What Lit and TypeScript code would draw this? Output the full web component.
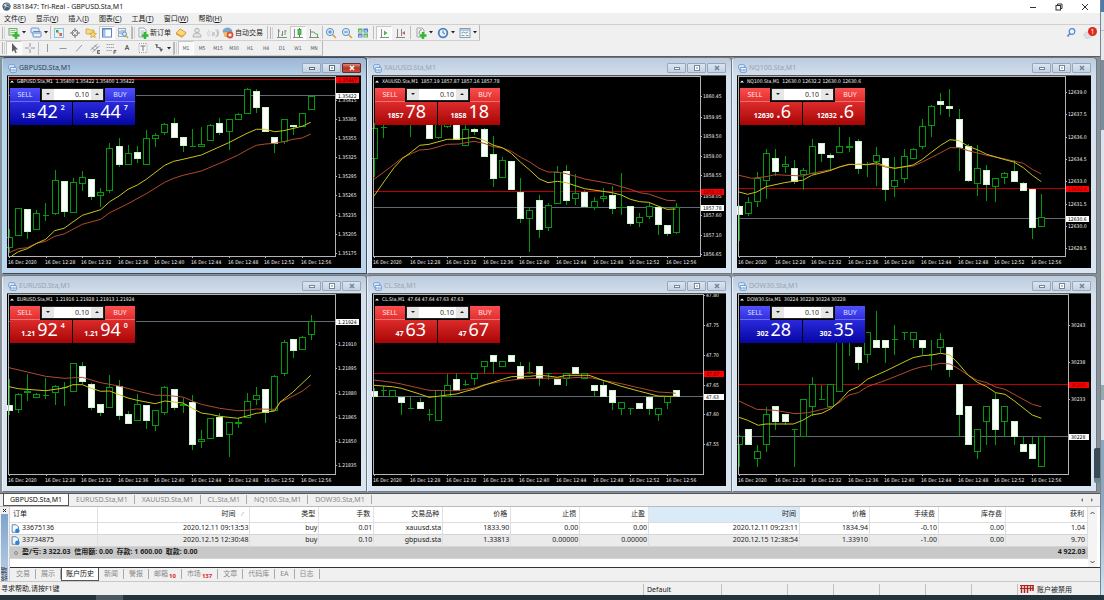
import { LitElement, html, svg, css, nothing } from "lit";
import { customElement, property } from "lit/decorators.js";
import { classMap } from "lit/directives/class-map.js";
import { styleMap } from "lit/directives/style-map.js";

/* ---------- data ---------- */

interface Chart {
  symbol: string;
  ohlc: string;
  active?: boolean;
  up?: boolean;
  sell: [string, string, string];
  buy: [string, string, string];
  axis: number;
  bid: [string, number];
  ask?: [string, number];
  labels: string;
  origin: number;
  candles: string;
  fast: string;
  slow: string;
}

// Series values are in thirds of a pixel: "kind high top bottom low".
// u = hollow body, w = filled body, d = dash, - = no bar.
const STEP = 3;
const toY = (v: number) => v / STEP - 19;
const snap = (v: number) => Math.floor(toY(v));

const CHARTS: Chart[] = [
  {
    symbol: "GBPUSD.Sta,M1", ohlc: "1.35400 1.35422 1.35400 1.35422", active: true, up: true,
    sell: ["1.35", "42", "2"], buy: ["1.35", "44", "7"], axis: 26, origin: 21,
    bid: ["1.35422", 119], ask: ["1.35447", 71],
    labels: "1.35415@132 1.35385@190 1.35355@247 1.35325@304 1.35295@362 1.35265@419 1.35235@477 1.35205@534 1.35175@592",
    candles: "u 517 545 573 585;u 457 457 538 538;w 460 460 525 548;u 460 472 520 520;d 440 478 478 494;u 340 373 472 475;w 377 377 465 480;u 365 379 470 470;u 343 364 382 402;w 369 369 422 430;u 393 409 418 450;u 259 277 404 410;w 243 270 326 332;u 265 292 325 325;w 268 288 306 320;u 220 247 325 325;u 228 237 247 272;u 200 206 230 235;w 185 202 244 244;w 244 244 268 287;d 218 271 271 271;u 210 265 271 271;u 203 208 253 253;w 184 202 230 235;u 190 190 226 280;u 168 175 190 190;u 95 100 172 172;w 97 105 155 170;w 153 153 227 227;w 245 245 263 288;u 190 190 255 262;w 207 208 212 235;u 172 172 211 211;u 120 120 160 160",
    fast: "35,600 55,587 82,578 110,562 137,550 164,524 192,517 247,478 302,461 329,437 357,420 384,400 412,387 439,370 494,328 521,316 549,310 604,297 686,260 741,232 769,220 796,220 824,227 851,224 906,211 932,199",
    slow: "27,590 55,578 82,575 110,562 137,556 164,541 192,534 247,505 302,490 329,470 384,443 439,413 494,379 521,367 549,358 604,345 659,322 713,298 741,282 769,268 796,264 824,262 851,257 879,250 906,246 932,234",
  },
  {
    symbol: "XAUUSD.Sta,M1", ohlc: "1857.19 1857.87 1857.16 1857.78",
    sell: ["1857", "78", ""], buy: ["1858", "18", ""], axis: 26, origin: 19,
    bid: ["1857.78", 455], ask: ["1858.18", 405],
    labels: "1860.45@122 1859.95@183 1859.50@240 1859.00@301 1858.55@358 1858.05@420 1857.60@477 1857.10@539 1856.65@595",
    candles: "u 200 218 307 360;d 200 214 215 245;-;-;d 200 205 205 242;-;w 200 200 247 247;u 200 200 244 248;u 200 205 211 215;w 200 200 250 250;u 205 220 268 268;w 215 220 227 235;w 215 220 300 300;w 237 296 366 392;u 300 313 364 364;w 315 315 401 401;w 365 409 487 500;u 453 462 487 585;w 415 433 520 543;u 440 447 514 523;u 327 348 442 442;w 324 345 433 445;u 352 411 427 446;w 400 409 451 455;u 420 436 453 460;u 395 420 428 435;w 387 418 456 473;d 350 455 455 476;w 450 450 502 507;u 470 484 499 512;u 440 450 481 488;w 455 455 505 535;w 507 507 533 538;u 440 455 529 532",
    fast: "25,420 60,370 85,335 110,308 137,288 162,268 190,265 245,250 275,250 325,244 355,253 382,267 410,275 437,292 464,318 492,342 520,368 547,380 575,376 602,380 657,398 740,410 767,417 794,430 822,437 849,439 877,450 904,460 930,459",
    slow: "25,370 75,333 110,305 137,293 162,282 190,280 245,265 280,264 325,256 355,262 382,272 410,276 437,286 464,303 492,318 520,337 547,348 575,348 602,353 657,369 740,384 794,400 822,410 849,414 877,424 904,433 930,434",
  },
  {
    symbol: "NQ100.Sta,M1", ohlc: "12630.0 12632.2 12630.0 12630.6",
    sell: ["12630", ".6", ""], buy: ["12632", ".6", ""], axis: 26, origin: 16,
    bid: ["12630.6", 486], ask: ["12632.6", 397],
    labels: "12639.0@110 12637.5@176 12636.0@243 12634.5@310 12633.0@377 12631.5@444 12630.0@511 12628.5@578",
    candles: "w 445 450 475 552;u 420 440 472 478;u 345 368 436 450;u 278 293 373 428;w 278 307 346 358;u 298 325 331 348;w 310 337 376 382;u 335 343 355 400;u 247 271 352 352;w 258 262 292 316;w 290 298 305 342;u 210 272 289 289;u 240 271 274 287;w 248 256 337 353;d 315 326 328 360;u 272 298 316 388;w 303 307 399 432;u 302 374 391 420;u 278 301 367 380;u 275 280 307 307;u 188 211 271 278;u 145 151 208 242;w 108 137 146 174;w 98 150 158 182;w 158 190 275 342;w 262 271 373 376;u 265 337 382 418;w 325 343 386 432;u 367 367 391 435;u 345 352 364 382;w 310 346 376 376;w 376 382 404 404;w 400 400 515 548;u 412 485 512 512",
    fast: "22,408 48,415 75,408 103,392 158,380 185,376 213,373 240,358 298,343 325,332 352,325 407,326 435,320 462,331 489,337 517,332 544,327 572,310 600,288 627,268 655,251 682,254 710,271 737,281 765,295 820,311 847,318 875,335 902,358 929,377",
    slow: "22,358 60,367 103,362 130,356 213,360 240,352 298,341 325,333 352,326 380,325 435,325 462,333 489,337 517,333 544,330 572,318 600,304 627,290 655,275 682,275 710,284 765,298 820,309 875,322 902,340 929,354",
  },
  {
    symbol: "EURUSD.Sta,M1", ohlc: "1.21916 1.21928 1.21913 1.21924",
    sell: ["1.21", "92", "4"], buy: ["1.21", "94", "0"], axis: 26, origin: 21,
    bid: ["1.21924", 142],
    labels: "1.21910@211 1.21895@283 1.21880@357 1.21865@430 1.21850@503 1.21835@575",
    candles: "w 312 393 410 420;u 355 362 405 415;u 298 352 356 378;u 355 361 370 370;d 310 365 366 372;u 330 337 355 390;d 322 341 341 395;u 268 268 352 352;w 263 278 323 330;w 325 331 400 407;w 391 391 416 425;u 300 340 400 400;w 316 337 424 436;w 408 421 448 448;u 357 391 440 440;w 393 393 440 464;u 409 409 455 470;u 335 340 415 420;w 342 346 400 405;u 370 390 394 414;w 360 386 511 527;u 465 496 502 521;u 433 433 493 493;w 415 429 488 488;u 445 445 481 546;u 430 445 449 460;u 356 381 430 430;u 336 364 376 390;w 346 346 416 445;u 300 307 409 409;u 195 205 299 304;w 195 195 229 250;u 184 190 226 226;u 122 142 181 196",
    fast: "27,338 55,344 137,350 192,342 219,332 247,332 274,343 302,352 329,351 357,362 384,372 412,379 466,389 494,381 549,387 577,403 604,417 631,421 659,427 686,430 713,433 741,426 769,418 824,411 840,385 879,354 932,304",
    slow: "27,281 82,294 137,307 192,313 247,310 302,326 357,336 412,351 466,364 494,364 549,369 577,381 604,391 659,403 713,410 741,409 769,405 824,406 840,385 879,366 906,352 932,332",
  },
  {
    symbol: "CL.Sta,M1", ohlc: "47.64 47.64 47.63 47.63",
    sell: ["47", "63", ""], buy: ["47", "67", ""], axis: 23, origin: 19,
    bid: ["47.63", 368], ask: ["47.67", 297],
    labels: "47.80@65 47.75@154 47.70@243 47.65@333 47.60@422 47.55@512",
    candles: "w 340 351 367 367;d 333 348 350 365;u 350 350 368 368;w 365 369 386 420;d 367 403 403 403;w 370 385 403 403;d 403 421 421 440;u 350 350 439 439;u 297 333 367 367;w 295 315 349 349;d 315 330 332 333;u 295 297 314 332;u 259 261 277 297;w 241 243 261 297;u 261 261 278 278;w 241 243 261 261;w 261 278 313 313;d 261 296 297 297;w 278 278 313 333;d 295 297 297 315;w 315 315 332 332;u 297 297 314 333;w 277 279 297 297;u 297 297 313 313;w 333 333 349 367;w 315 333 367 367;w 350 350 385 405;u 385 386 403 422;d 403 403 403 421;w 385 387 403 403;w 367 369 403 421;u 403 403 421 440;u 367 368 385 403;w 350 350 366 366",
    fast: "25,334 80,338 107,343 162,360 190,370 217,367 245,363 272,360 300,352 327,345 355,334 382,325 410,316 437,308 464,307 492,307 520,304 547,306 575,310 602,304 670,304 712,319 767,337 822,352 877,366 904,367 935,367",
    slow: "25,318 80,325 107,330 190,349 272,350 327,342 355,332 410,322 464,315 520,313 602,312 650,310 680,312 712,319 767,329 822,342 877,354 915,356 930,358",
  },
  {
    symbol: "DOW30.Sta,M1", ohlc: "30224 30228 30224 30228", up: true,
    sell: ["302", "28", ""], buy: ["302", "35", ""], axis: 23, origin: 16,
    bid: ["30228", 488], ask: ["30235", 331],
    labels: "30243@153 30238@265 30233@377",
    candles: "u 480 488 510 578;w 465 465 510 510;u 510 532 554 578;u 398 421 510 532;w 398 398 443 465;w 420 420 443 452;d 465 465 467 578;u 376 376 487 487;u 308 331 398 423;d 331 376 376 376;u 331 331 398 398;u 190 190 353 353;d 200 200 200 243;w 215 220 264 287;u 175 175 242 264;w 108 198 220 220;w 195 198 220 264;d 152 197 197 242;d 175 176 176 197;u 175 175 197 220;w 195 198 220 242;d 197 242 244 287;u 175 197 220 235;w 220 220 286 308;w 331 331 420 488;w 395 398 510 510;u 465 465 532 554;u 398 398 443 510;w 355 376 465 510;u 398 398 443 488;w 443 443 486 510;w 488 510 532 532;w 488 510 554 554;u 487 487 578 578",
    fast: "22,430 48,439 80,454 103,450 185,450 213,439 240,423 270,418 298,404 325,380 352,350 380,338 407,316 435,303 462,291 517,264 544,251 572,245 600,243 627,238 655,243 682,271 710,304 737,325 765,338 792,356 820,361 847,380 902,423 929,433",
    slow: "22,381 75,406 130,409 190,419 230,416 298,400 325,384 352,363 380,356 407,338 462,319 517,297 544,286 572,278 600,274 627,268 655,270 682,285 710,304 737,319 765,326 792,339 820,346 847,361 902,391 929,398",
  },
];

const TIMES = ["16 Dec 2020", "16 Dec 12:28", "16 Dec 12:32", "16 Dec 12:36", "16 Dec 12:40", "16 Dec 12:44", "16 Dec 12:48", "16 Dec 12:52", "16 Dec 12:56"];

const COLUMNS: [string, number][] = [
  ["订单", 88], ["时间", 152], ["类型", 69], ["手数", 55], ["交易品种", 69], ["价格", 68], ["止损", 69],
  ["止盈", 69], ["时间", 151], ["价格", 70], ["手续费", 69], ["库存费", 67], ["获利", 82],
];
const TOTAL = COLUMNS.reduce((sum, c) => sum + c[1], 0);

const ORDERS = [
  ["33675136", "2020.12.11 09:13:53", "buy", "0.01", "xauusd.sta", "1833.90", "0.00", "0.00", "2020.12.11 09:23:11", "1834.94", "-0.10", "0.00", "1.04"],
  ["33734875", "2020.12.15 12:30:48", "buy", "0.10", "gbpusd.sta", "1.33813", "0.00000", "0.00000", "2020.12.15 12:38:54", "1.33910", "-1.00", "0.00", "9.70"],
];

const MENUS: [string, string][] = [["文件", "F"], ["显示", "V"], ["插入", "I"], ["图表", "C"], ["工具", "T"], ["窗口", "W"], ["帮助", "H"]];
const PERIODS = ["M1", "M5", "M15", "M30", "H1", "H4", "D1", "W1", "MN"];
const CHART_TABS = ["GBPUSD.Sta,M1", "EURUSD.Sta,M1", "XAUUSD.Sta,M1", "CL.Sta,M1", "NQ100.Sta,M1", "DOW30.Sta,M1"];
const PANEL_TABS: [string, string][] = [["交易", ""], ["展示", ""], ["账户历史", ""], ["新闻", ""], ["警报", ""], ["邮箱", "10"], ["市场", "137"], ["文章", ""], ["代码库", ""], ["EA", ""], ["日志", ""]];

/* ---------- icons, 12 x 12 ---------- */

const ICONS: Record<string, unknown> = {
  newChart: svg`<rect x="1" y="1.5" width="8" height="6.5" fill="#dff0df" stroke="#5aa05a"/><path d="M2.500 3.500h5M2.500 5.500h5" stroke="#7ab87a"/><path d="M8 5v7M4.500 8.500h7" stroke="#12b012" stroke-width="2.500"/>`,
  profiles: svg`<rect x="1" y="1" width="8" height="5" rx="1" fill="#dce9fa" stroke="#5b86c4"/><rect x="3" y="4.500" width="8" height="5.500" rx="1" fill="#eaf2fc" stroke="#4a78ba"/><path d="M4 6h6" stroke="#4a78ba"/>`,
  watch: svg`<rect x="1.500" y="1.500" width="9" height="9" fill="#e4f3fb" stroke="#7fb8da"/><path d="M3 3h2.500v2.500H3z" fill="#12a012"/><path d="M6.500 6H9v3H6.500z" fill="#e0451c"/><path d="M4.500 5l3 2.500" stroke="#d8702c"/>`,
  cross: svg`<circle cx="6" cy="6" r="3" fill="none" stroke="#666"/><path d="M6 1v4M6 7v4M1 6h4M7 6h4" stroke="#666"/>`,
  folderStar: svg`<path d="M1 2h3l1 1h4v4H1z" fill="#f4d774" stroke="#c99a26" stroke-width=".8"/><path d="M8 4l1 2.300 2.500.2-1.900 1.600.6 2.500L8 9.300l-2.200 1.300.6-2.500L4.500 6.500 7 6.300z" fill="#ffd84a" stroke="#c48f13" stroke-width=".7"/>`,
  navigator: svg`<rect x="1.500" y="1.500" width="9" height="8.500" fill="#fff" stroke="#3d74b8"/><path d="M2 2h2.500v8H2z" fill="#8fb7e6"/><path d="M1.500 2h9" stroke="#3d74b8"/>`,
  tester: svg`<rect x="1.500" y="1.500" width="7" height="8" fill="#e6eef7" stroke="#8ba3be"/><path d="M3 7V4M5 8V3M7 6V3" stroke="#6c8bb0"/><circle cx="7.500" cy="7" r="2" fill="#d9ecfb" stroke="#4b86c4"/><path d="M9 8.500l2 2.500" stroke="#caa030" stroke-width="1.500"/>`,
  order: svg`<path d="M2 1h5l2 2v7H2z" fill="#fff" stroke="#8a9bb0"/><path d="M3.500 4h4M3.500 6h4" stroke="#aab"/><path d="M8 5v7M4.500 8.500h7" stroke="#12b012" stroke-width="2.500"/>`,
  gold: svg`<path d="M5 2l6 3.500L7 9.500 1 6z" fill="#ffd75a" stroke="#c07d12" stroke-width=".8"/><path d="M1 6v1.500l6 3.300V9.500zM7 9.500v1.300l4-4V5.500z" fill="#d98f1c"/>`,
  person: svg`<circle cx="6" cy="3.500" r="2.200" fill="#e2e2e2" stroke="#a8a8a8"/><path d="M2 10c0-3 1.500-4 4-4s4 1 4 4z" fill="#e2e2e2" stroke="#a8a8a8"/>`,
  radio: svg`<path d="M5 4.500l3 1v3l-3 1z" fill="#c4c4c4"/><path d="M3.500 4a3 3 0 0 0 0 4.500M1.800 3a5 5 0 0 0 0 6.500" fill="none" stroke="#ccc" stroke-width=".9"/><path d="M8.500 3a4 4 0 0 1 0 7M10 2a6 6 0 0 1 0 8" fill="none" stroke="#aaa" stroke-width=".9"/>`,
  auto: svg`<path d="M1 4.500C1 2.500 3 1 5.500 1S10 2.500 10 4.500z" fill="#5aa3dd" stroke="#3b7cb6" stroke-width=".6"/><path d="M1.500 5h8L8 9.500H3z" fill="#f6c64e" stroke="#b9851b" stroke-width=".6"/><circle cx="8" cy="8" r="3.400" fill="#dd2f1c"/><rect x="6.600" y="6.700" width="2.800" height="2.600" fill="#fff"/>`,
  bars: svg`<path d="M2.500 2v8.500M1 10.500h10M2.500 4H4" stroke="#777" fill="none"/><path d="M6.500 4v5M6.500 8H5M9 3v5M9 4h1.500" stroke="#588a58"/>`,
  candle: svg`<path d="M2.500 2v8.500M1 10.500h10" stroke="#777"/><path d="M7.500 1v9" stroke="#12901c"/><rect x="6" y="2.500" width="3" height="5" fill="#35c03f" stroke="#12901c" stroke-width=".8"/>`,
  line: svg`<path d="M2.500 2v8.500M1 10.500h10" stroke="#777"/><path d="M3 5h3l1.500 2H9.500v3" stroke="#3a9a44" fill="none"/>`,
  zoomIn: svg`<circle cx="5" cy="5" r="3.600" fill="#d6ebfb" stroke="#3f83c8"/><path d="M3.200 5h3.600M5 3.200v3.600" stroke="#2a66b0"/><path d="M7.800 7.800l3 3" stroke="#d0a02c" stroke-width="1.800"/>`,
  zoomOut: svg`<circle cx="5" cy="5" r="3.600" fill="#d6ebfb" stroke="#3f83c8"/><path d="M3.200 5h3.600" stroke="#2a66b0"/><path d="M7.800 7.800l3 3" stroke="#d0a02c" stroke-width="1.800"/>`,
  tile: svg`<rect x="1" y="1.500" width="4.500" height="4" fill="#3fae3f"/><rect x="6.500" y="1.500" width="4.500" height="4" fill="#3c6fd0"/><rect x="1" y="6.500" width="4.500" height="4" fill="#3c6fd0"/><rect x="6.500" y="6.500" width="4.500" height="4" fill="#3fae3f"/><path d="M2 4h2.500M7.500 4H10M2 9h2.500M7.500 9H10" stroke="#fff"/>`,
  scroll: svg`<path d="M3.500 2v8.500M2 10.500h9" stroke="#777"/><path d="M6 3.500l3.500 2.500L6 8.500z" fill="#31a63b"/>`,
  shift: svg`<path d="M3.500 2v8.500M2 10.500h9M7.500 2v7" stroke="#777"/><path d="M11 4v4L8 6z" fill="#b5564a"/>`,
  indicator: svg`<path d="M2 1h5l2 2v7H2z" fill="#f4f4f4" stroke="#999"/><path d="M4 7c1-5 1-4 3-4" stroke="#777" fill="none"/><path d="M8 5v7M4.500 8.500h7" stroke="#12b012" stroke-width="2.500"/>`,
  clock: svg`<circle cx="6" cy="6" r="4.300" fill="#e9f4fe" stroke="#2c6fc0" stroke-width="1.800"/><path d="M6 3.500V6l2 1" stroke="#555" fill="none"/>`,
  template: svg`<rect x="1" y="1.500" width="10" height="9" fill="#eef5fb" stroke="#6f93b5"/><path d="M1 3h10" stroke="#6f93b5"/><path d="M2.500 6l2-1 2 1 2.500-1M2.500 8.500h3M7 8.500h2.500" stroke="#6f9a86" fill="none"/>`,
  arrow: svg`<path d="M4 1v9l2-2 1.500 3.200 1.300-.6L7.300 7.500H10z" fill="#444"/>`,
  plus: svg`<path d="M6 1v4M6 7v4M1 6h4M7 6h4" stroke="#888"/>`,
  vline: svg`<path d="M6.500 2v8" stroke="#888"/>`,
  hline: svg`<path d="M2.500 6.500h7" stroke="#888"/>`,
  trend: svg`<path d="M3 9.500l6-6.500" stroke="#888"/>`,
  channel: svg`<path d="M1.500 8l7-6M3.500 10l7-6M3 5.500l3 3M5.500 3l3 3" stroke="#888" fill="none"/><path d="M11 8.500H8.500v3H11M8.500 10H10.500" stroke="#333" stroke-width=".8" fill="none"/>`,
  fibo: svg`<path d="M1.500 2.500h8M1.500 5.500h8M1.500 8.500h6" stroke="#999" stroke-dasharray="1.500 .5"/><path d="M9 12V8.500h2.500M9 10h2" stroke="#333" stroke-width=".8" fill="none"/>`,
  label: svg`<rect x="2" y="1.500" width="8" height="9" fill="#f8f8f8" stroke="#999" stroke-dasharray="1 1"/><path d="M3.500 4h5M6 4v5" stroke="#666"/>`,
  shapes: svg`<path d="M2 2l3 .5-1 3zM6 6l4 1-2 3z" fill="#444"/><path d="M3 5l5 1" stroke="#444"/>`,
  chartWin: svg`<rect x="1" y="1" width="8" height="6" rx="1" fill="#e7f0fb" stroke="#6d9bd3" stroke-width="1.300"/><rect x="3" y="4.500" width="8" height="6.500" rx="1" fill="#f5f9fe" stroke="#5b90d2" stroke-width="1.300"/><path d="M5 9.500V7M7 9.500V6.500M9 9.500V7" stroke="#4f86cc"/>`,
  find: svg`<circle cx="7" cy="4.500" r="2.800" fill="#eef5ff" stroke="#3a6fd0" stroke-width="1.200"/><path d="M5 6.500L2.500 9.500" stroke="#3a6fd0" stroke-width="1.600"/>`,
  bell: svg`<path d="M1 8c0-2 2-3 4-3s4 1 4 3-2 3-4 3l-2 1 .3-1.300C2 10.200 1 9.300 1 8z" fill="#ddd" stroke="#bbb" stroke-width=".6"/>`,
  doc: svg`<path d="M1.500 1h5.500l3 3v7H1.500z" fill="#f4f9ff" stroke="#5486b8" stroke-width="1.300"/><circle cx="8.500" cy="9" r="3" fill="#2d83d2"/>`,
  logo: svg`<circle cx="6" cy="6" r="5.500" fill="#4a6072"/><path d="M2 5c2-3 6-3 8-1M3 9c1-3 4-4 7-2" stroke="#d9e6ee" fill="none"/><circle cx="4.500" cy="4.500" r="1.500" fill="#e8f0f4"/>`,
};
const icon = (name: string) => html`<svg class="icon" width="12" height="12" viewBox="0 0 12 12" fill="none" aria-hidden="true">${ICONS[name]}</svg>`;

const base = css`
  * { box-sizing: border-box; }
  button, input { font: inherit; color: inherit; margin: 0; padding: 0; border: 0; background: none; }
  button { display: inline-flex; align-items: center; justify-content: center; }
  svg { display: block; flex: none; }
`;

/* ---------- one chart window ---------- */

@customElement("chart-window")
class ChartWindow extends LitElement {
  @property({ attribute: false }) chart!: Chart;

  static styles = [base, css`
    :host { display: block; min-width: 0; }
    .window { height: 100%; padding: 0 5px 5px 4px; border: 1px solid #6f7780; border-left-color: #e9f2fa; border-radius: 4px 4px 0 0; background: linear-gradient(#bccbdd, #d5e1ee 20px, #d9e5f1); }
    .window.active { background: linear-gradient(#9cb6d4, #b9d1ea 20px, #bcd4ec); border-color: #3c4d60; border-left-color: #a8e4f4; }
    .bar { display: flex; align-items: center; height: 17px; padding-top: 3px; gap: 1px; color: #97a4b3; }
    .active .bar { color: #2f3f52; }
    .bar .icon { width: 9px; height: 9px; margin: 0 1px; }
    .title { flex: 1; line-height: 10px; margin: 0; font-size: 7px; font-weight: 400; }
    .control { width: 19px; height: 10px; border: 1px solid #97a8bc; border-radius: 1px; background: linear-gradient(#dbe5f0, #c4d2e2); color: #76869a; }
    .active .control { color: #5c6c7e; }
    .active .control.close { background: linear-gradient(#d98a7c, #b5331f 50%, #c9503a); border-color: #6b2a22; color: #fff; }
    .client { position: relative; display: flex; height: 193px; background: #000; border-top: 1px solid #555; overflow: hidden; }
    .plot { flex: 1 1 0; width: 0; min-width: 0; margin-top: -1px; }
    .scale { margin-top: -1px; }
    text { font: 5px "DejaVu Sans Condensed", "DejaVu Sans", sans-serif; fill: #f2f2f2; }
    .frame { stroke: #b4b4b4; shape-rendering: crispEdges; }
    .u { fill: #000; stroke: #009a0a; shape-rendering: crispEdges; }
    .w { fill: #fff; stroke: #c6f5c6; shape-rendering: crispEdges; }
    .wick { stroke: #009a0a; shape-rendering: crispEdges; }
    .fast { fill: none; stroke: #c9c417; stroke-width: 1; }
    .slow { fill: none; stroke: #b3492e; stroke-width: 1; }
    .bidline { stroke: #5f6a74; shape-rendering: crispEdges; }
    .askline { stroke: #c00000; shape-rendering: crispEdges; }
    .tag { fill: #fff; }
    .tag.ask { fill: #f00; }
    text.tagtext { fill: #000; }
    text.asktext { fill: #600000; }
    .trade { position: absolute; left: 3px; top: 12px; width: 126px; display: grid; grid-template-rows: 14px 23px; font-size: 7px; color: #fff; background: #000; padding-right: 1px; }
    .row { display: flex; gap: 1px; }
    .side { width: 30px; background: linear-gradient(#fb4e4e, #e22f2f); color: #ffe3e3; border-bottom: 1px solid #f07070; }
    .up .side { background: linear-gradient(#5050fb, #3030e0); color: #dfe0ff; border-bottom-color: #6a6af0; }
    .volume { flex: 1; display: flex; background: #fff; margin: 0 0 1px; border: 1px solid #222; color: #222; min-width: 0; }
    .volume input { flex: 1; width: 0; min-width: 0; text-align: right; padding-right: 2px; outline: none; color: #333; }
    .volume button { width: 12px; background: #e6e6e6; }
    .price { flex: 1; align-items: baseline; background: linear-gradient(#dc2b2b, #a80505); padding: 1px 0 0 4px; }
    .up .price { background: linear-gradient(#2a2adc, #0505a2); }
    .price.deep { justify-content: flex-end; padding-right: 11px; }
    .small { font-weight: 700; line-height: 8px; }
    .big { font-size: 18px; line-height: 16px; margin-left: 2px; }
    .sup { align-self: flex-start; font-weight: 600; line-height: 8px; margin: 1px 0 0 3px; }
  `];

  private bar(raw: string, i: number) {
    const [kind, ...nums] = raw.split(" ");
    if (kind === "-") return nothing;
    const [hi, top, bottom, low] = nums.map((n) => snap(+n) + 0.5);
    const x = Math.floor(2.2 + i * 9.16) + 0.5;
    return svg`<line class="wick" x1=${x} x2=${x} y1=${hi} y2=${low + 0.5} />
      ${kind === "d"
        ? svg`<line class="wick" x1=${x - 3} x2=${x + 3} y1=${top} y2=${top} />`
        : svg`<rect class=${kind} x=${x - 3} y=${top} width="6" height=${Math.max(1, bottom - top)} />`}`;
  }

  private path(points: string) {
    return points.split(" ").map((p) => {
      const [x, y] = p.split(",").map(Number);
      return `${((x - this.chart.origin) / STEP).toFixed(1)},${toY(y).toFixed(1)}`;
    }).join(" ");
  }

  private quote(side: string, q: [string, string, string]) {
    return html`<button class=${classMap({ price: true, deep: !q[2] })} aria-label="${side} ${q.join("")}">
      <span class="small">${q[0]}</span><span class="big">${q[1]}</span>${q[2] ? html`<span class="sup">${q[2]}</span>` : nothing}
    </button>`;
  }

  render() {
    const c = this.chart;
    const bidY = snap(c.bid[1]) + 0.5;
    const askY = c.ask ? snap(c.ask[1]) + 0.5 : 0;
    return html`<section class=${classMap({ window: true, active: !!c.active })}>
      <header class="bar">
        ${icon("chartWin")}
        <h2 class="title">${c.symbol}</h2>
        <button class="control" aria-label="最小化"><svg width="8" height="6"><rect x="1.500" y="2.500" width="5" height="2" fill="#fff" stroke="currentColor" /></svg></button>
        <button class="control" aria-label="最大化"><svg width="8" height="6"><rect x="1.500" y=".5" width="5" height="5" fill="#fff" stroke="currentColor" /><path d="M3 3h2" stroke="currentColor" /></svg></button>
        <button class="control close" aria-label="关闭"><svg width="8" height="6"><path d="M2 1l4 4M6 1L2 5" stroke="currentColor" stroke-width="1.600" /></svg></button>
      </header>
      <div class="client">
        <svg class="plot" height="193">
          ${c.ask ? svg`<line class="askline" x1="1" x2="100%" y1=${askY} y2=${askY} />` : nothing}
          <line class="bidline" x1="1" x2="100%" y1=${bidY} y2=${bidY} />
          ${c.candles.split(";").map((raw, i) => this.bar(raw, i))}
          <polyline class="slow" points=${this.path(c.slow)} />
          <polyline class="fast" points=${this.path(c.fast)} />
          <rect x="0" y="182" width="100%" height="11" fill="#000" />
          <line class="frame" x1="1" x2="100%" y1="1.500" y2="1.500" />
          <line class="frame" x1="1.500" x2="1.500" y1="1" y2="182" />
          <line class="frame" x1="1" x2="100%" y1="181.500" y2="181.500" />
          <path d="M3 7.500l2-2 2 2z" fill="#fff" />
          <text x="10" y="8" xml:space="preserve">${c.symbol}  ${c.ohlc}</text>
          ${TIMES.map((t, i) => {
            const x = Math.round(1 + i * 36.6);
            return svg`<line class="frame" x1=${x + 1.5} x2=${x + 1.5} y1="181" y2="183" /><text x=${x} y="189">${t}</text>`;
          })}
        </svg>
        <svg class="scale" width=${c.axis} height="193">
          <line class="frame" x1=".5" x2=".5" y1="1" y2="182" />
          ${c.labels.split(" ").map((l) => {
            const [label, at] = l.split("@");
            const y = snap(+at);
            return svg`<line class="frame" x1="0" x2="2" y1=${y + 0.5} y2=${y + 0.5} /><text x="3" y=${y + 2}>${label}</text>`;
          })}
          <rect class="tag" x="1" y=${bidY - 2.5} width=${c.axis - 3} height="6" />
          <text class="tagtext" x="3" y=${bidY + 2.5}>${c.bid[0]}</text>
          ${c.ask ? svg`<rect class="tag ask" x="1" y=${askY - 2.5} width=${c.axis - 3} height="6" /><text class="asktext" x="3" y=${askY + 2.5}>${c.ask[0]}</text>` : nothing}
        </svg>
        <div class=${classMap({ trade: true, up: !!c.up })}>
          <div class="row">
            <button class="side">SELL</button>
            <div class="volume">
              <button aria-label="减少"><svg width="4" height="3"><path d="M0 0h4L2 2z" fill="#222" /></svg></button>
              <input aria-label="${c.symbol} 手数" .value=${"0.10"} />
              <button aria-label="增加"><svg width="4" height="3"><path d="M0 2h4L2 0z" fill="#222" /></svg></button>
            </div>
            <button class="side">BUY</button>
          </div>
          <div class="row">${this.quote("SELL", c.sell)}${this.quote("BUY", c.buy)}</div>
        </div>
      </div>
    </section>`;
  }
}

/* ---------- application shell ---------- */

@customElement("app-root")
class AppRoot extends LitElement {
  static styles = [base, css`
    :host { display: flex; flex-direction: column; min-height: 100vh; background: #f0f0f0; color: #222; font: 7px/10px "Noto Sans", "Noto Sans CJK SC", sans-serif; overflow: hidden; }
    .desktop { flex: 1; display: flex; }
    .app { flex: 1; min-width: 0; display: flex; flex-direction: column; }
    .behind { width: 4px; border-left: 1px solid #70859a; background: linear-gradient(#4f7ca6 0 12px, #e4e9ee 12px 30px, #b4bfca 30px 31px, #e8e8e8 31px 60px, #7d8a97 60px 130px, #dfe3e7 130px 385px, #9aa 385px 400px, #dfe3e7 400px 440px, #8fa6bb 440px 500px, #cfe4ef); }
    .taskbar { height: 5px; background: #22343c; padding-left: 96px; }
    .task { width: 27px; height: 5px; background: #4a5a62; }
    .caption { display: flex; align-items: center; height: 13px; background: #fff; }
    .caption .icon { width: 9px; height: 9px; margin: 0 2px; }
    .caption h1 { flex: 1; margin: 0; font-size: 7px; font-weight: 400; }
    .caption button { width: 26px; height: 13px; }
    .caption .end { margin-right: 2px; }
    .menu { display: flex; gap: 10px; height: 12px; padding: 1px 4px 0; border-bottom: 1px solid #cfcfcf; }
    .menu button { line-height: 9px; align-items: flex-start; white-space: nowrap; }
    u { text-underline-offset: 1px; text-decoration-thickness: 1px; }
    .tools { display: flex; align-items: center; height: 16px; }
    .tools.lower { height: 15px; }
    .tools .strip { display: flex; align-items: center; height: 100%; padding-left: 2px; border-right: 1px solid #b8b8b8; border-bottom: 1px solid #d0d0d0; }
    .tools button { width: 16px; height: 14px; white-space: nowrap; }
    .tools .icon { opacity: .85; }
    .tools .drop { width: 22px; gap: 2px; }
    .tools .wide { width: auto; padding: 0 2px 0 1px; gap: 1px; }
    .pressed { background: #f9f9f9; border: 1px solid #c8c8c8; border-right-color: #fff; border-bottom-color: #fff; }
    .grip { width: 3px; height: 12px; border-left: 1px solid #b5b5b5; border-right: 1px solid #d5d5d5; margin-right: 1px; }
    .sep { width: 1px; height: 13px; background: #bdbdbd; margin: 0 2px; }
    .sep.tight { margin: 0; }
    .tools .period { font: 5px/8px "DejaVu Sans Condensed", "DejaVu Sans", sans-serif; color: #555; }
    .spacer { flex: 1; }
    .tools .notice { position: relative; width: 20px; margin-right: 1px; }
    .badge { position: absolute; right: 2px; top: 1px; width: 9px; height: 9px; border-radius: 5px; background: #de2a1d; color: #fff; line-height: 9px; text-align: center; }
    .mdi { position: relative; flex: 1; display: grid; grid-template-columns: repeat(3, minmax(0, 1fr)); grid-auto-rows: 217px; row-gap: 1px; padding: 0 3px 1px 2px; border-top: 1px solid #5c5c5c; background: #8a9097; }
    .widget { position: absolute; right: 0; top: 391px; width: 6px; height: 35px; border-radius: 2px 0 0 2px; background: #3c4a58; border-bottom: 5px solid #6d8794; }
    .tabs { display: flex; height: 13px; border-top: 1px solid #555; }
    .tabs button { padding: 0 6px 0 7px; color: #888; border-right: 1px solid #aaa; height: 9px; margin-top: 1px; white-space: nowrap; }
    .tabs button.on { background: #fff; color: #111; border: 1px solid #555; border-top: 0; height: 12px; margin: 0; padding: 0 6px; }
    .charts { padding-left: 3px; }
    .pager { color: #777; gap: 8px; display: flex; padding-right: 6px; align-items: center; }
    .terminal { display: flex; height: 75px; border-top: 1px solid #bbb; }
    .handle { width: 9px; display: flex; flex-direction: column; align-items: center; color: #333; padding: 0 1px; }
    .handle button { height: 7px; }
    .grab { flex: 1; width: 7px; background: linear-gradient(#b9d0e8, #7fa3cb); writing-mode: vertical-rl; line-height: 7px; transform: rotate(180deg); overflow: hidden; }
    .panel { flex: 1; min-width: 0; display: flex; flex-direction: column; border-left: 1px solid #d0d0d0; }
    .grid { flex: 1; display: flex; background: #fff; padding-right: 3px; }
    .left { flex: 1; min-width: 0; }
    table { width: 100%; border-collapse: collapse; table-layout: fixed; line-height: 10px; }
    th { height: 15px; font-weight: 400; text-align: right; padding: 0 3px; border-right: 1px solid #e2e2e2; border-bottom: 1px solid #ddd; }
    th:first-child, td:first-child { text-align: left; }
    th.sorted { background: #d9ebf9; }
    .slash { display: inline-block; width: 8px; color: #888; font-size: 6px; text-align: center; margin-left: 3px; }
    td { height: 12px; padding: 0 1px; text-align: right; border-right: 1px solid #dedede; white-space: nowrap; }
    td:last-child { padding-right: 2px; }
    td:first-child { padding-left: 1px; }
    .order { display: flex; align-items: center; gap: 2px; height: 11px; }
    .order .icon { width: 9px; height: 9px; }
    tbody tr { border-bottom: 1px solid #d4d4d4; }
    tbody tr.alt { background: #ebebeb; }
    tr.sum td { background: #c8c8c8; font-weight: 700; border-right: 0; }
    .sumtext { padding-left: 11px; position: relative; display: block; }
    .sumtext i { position: absolute; left: 3px; top: 4px; width: 4px; height: 4px; border: 1px solid #888; border-radius: 2px; }
    .scrollbar { width: 9px; background: #f4f4f4; display: flex; flex-direction: column; justify-content: space-between; align-items: center; padding: 4px 0 3px; }
    .below { padding-left: 1px; height: 14px; border-top: 1px solid #333; }
    .below button { padding: 0 5px; height: 10px; margin-top: 1px; }
    .below button.on { height: 13px; margin: 0; padding: 0 4px; }
    .count { align-self: flex-end; color: #d8262c; font: 700 6px/6px "Noto Sans", sans-serif; margin-left: 1px; }
    .status { display: flex; align-items: center; height: 14px; padding: 1px 2px 0 1px; border-top: 1px solid #c8c8c8; }
    .cell { border-left: 1px solid #c0c0c0; height: 11px; line-height: 11px; padding-left: 3px; flex: none; }
    .c78 { width: 78px; } .c66 { width: 66px; } .c46 { width: 46px; }
    .c82 { width: 81px; display: flex; align-items: center; gap: 3px; padding-left: 2px; white-space: nowrap; }
    .msg { flex: 1; }
  `];

  private tool(name: string, label: string, cls = "") {
    return html`<button class=${cls} aria-label=${label}>${icon(name)}${cls.includes("drop")
      ? html`<svg width="4" height="3"><path d="M0 0h4L2 2.500z" fill="#222" /></svg>` : nothing}</button>`;
  }

  render() {
    return html`
      <div class="desktop">
        <main class="app">
          <header class="caption">
            ${icon("logo")}
            <h1>881847: Tri-Real - GBPUSD.Sta,M1</h1>
            <button aria-label="最小化"><svg width="8" height="8"><path d="M1 4.500h6" stroke="#333" /></svg></button>
            <button aria-label="还原"><svg width="8" height="8" fill="none" stroke="#333"><rect x="1" y="2.500" width="4.500" height="4.500" /><path d="M2.500 2.500V1H7v4.500H5.500" /></svg></button>
            <button class="end" aria-label="关闭"><svg width="8" height="8"><path d="M1 1l6 6M7 1L1 7" stroke="#333" /></svg></button>
          </header>
          <nav class="menu">${MENUS.map(([t, k]) => html`<button>${t}(<u>${k}</u>)</button>`)}</nav>

          <div class="tools">
            <div class="strip">
              <span class="grip"></span>
              ${this.tool("newChart", "新图表", "drop")}${this.tool("profiles", "配置文件", "drop")}
              <span class="sep tight"></span>
              ${this.tool("watch", "市场报价")}${this.tool("cross", "数据窗口")}${this.tool("folderStar", "收藏夹")}${this.tool("navigator", "导航", "pressed")}${this.tool("tester", "策略测试")}
              <span class="sep tight"></span><span class="grip"></span>
              <button class="wide">${icon("order")}新订单</button>
              ${this.tool("gold", "元编辑器")}${this.tool("person", "账户")}${this.tool("radio", "信号")}
              <button class="wide">${icon("auto")}自动交易</button>
              <span class="sep"></span><span class="grip"></span>
              ${this.tool("bars", "柱状图")}${this.tool("candle", "蜡烛图", "pressed")}${this.tool("line", "折线图")}
              <span class="sep tight"></span>
              ${this.tool("zoomIn", "放大")}${this.tool("zoomOut", "缩小")}${this.tool("tile", "平铺窗口")}
              <span class="sep"></span>
              ${this.tool("scroll", "自动滚动", "pressed")}${this.tool("shift", "图表平移")}
              <span class="sep"></span>
              ${this.tool("indicator", "指标", "drop")}${this.tool("clock", "周期", "drop")}${this.tool("template", "模板", "drop")}
            </div>
            <span class="spacer"></span>
            ${this.tool("find", "搜索")}
            <button class="notice" aria-label="通知">${icon("bell")}<span class="badge">1</span></button>
          </div>

          <div class="tools lower">
            <div class="strip">
              <span class="grip"></span>
              ${this.tool("arrow", "光标", "pressed")}${this.tool("plus", "十字线")}
              <span class="sep tight"></span>
              ${this.tool("vline", "垂直线")}${this.tool("hline", "水平线")}${this.tool("trend", "趋势线")}${this.tool("channel", "通道")}${this.tool("fibo", "斐波那契")}
              <button aria-label="文字">A</button>
              ${this.tool("label", "标签")}${this.tool("shapes", "箭头", "drop")}
              <span class="sep tight"></span><span class="grip"></span>
              ${PERIODS.map((p, i) => html`<button class=${classMap({ period: true, pressed: i === 0 })}>${p}</button>`)}
            </div>
          </div>

          <div class="mdi">
            ${CHARTS.map((c) => html`<chart-window .chart=${c}></chart-window>`)}
            <span class="widget"></span>
          </div>

          <nav class="tabs charts">
            ${CHART_TABS.map((t, i) => html`<button class=${classMap({ on: i === 0 })}>${t}</button>`)}
            <span class="spacer"></span>
            <span class="pager">
              <svg width="3" height="5"><path d="M3 0v4L1 2z" fill="#777" /></svg>
              <svg width="3" height="5"><path d="M0 0v4l2-2z" fill="#777" /></svg>
            </span>
          </nav>

          <section class="terminal">
            <div class="handle">
              <button aria-label="关闭"><svg width="5" height="5"><path d="M1 1l3 3M4 1L1 4" stroke="#222" /></svg></button>
              <div class="grab">终端</div>
            </div>
            <div class="panel">
              <div class="grid">
                <div class="left">
                  <table>
                    <colgroup>${COLUMNS.map((c) => html`<col style=${styleMap({ width: `${(c[1] / TOTAL) * 100}%` })}>`)}</colgroup>
                    <thead><tr>${COLUMNS.map((c, i) => html`<th scope="col" class=${classMap({ sorted: i === 8 })}>${c[0]}${i === 1 ? html`<span class="slash">⁄</span>` : nothing}</th>`)}</tr></thead>
                    <tbody>
                      ${ORDERS.map((row, r) => html`<tr class=${classMap({ alt: r === 1 })}>${row.map((v, i) => html`<td>${i === 0 ? html`<span class="order">${icon("doc")}${v}</span>` : v}</td>`)}</tr>`)}
                      <tr class="sum"><td colspan="12"><span class="sumtext"><i></i>盈/亏: 3 322.03&nbsp; 信用额: 0.00&nbsp; 存款: 1 600.00&nbsp; 取款: 0.00</span></td><td>4 922.03</td></tr>
                    </tbody>
                  </table>
                </div>
                <div class="scrollbar">
                  <svg width="5" height="4"><path d="M.5 3l2-2 2 2" fill="none" stroke="#444" /></svg>
                  <svg width="5" height="4"><path d="M.5 1l2 2 2-2" fill="none" stroke="#444" /></svg>
                </div>
              </div>
              <nav class="tabs below">
                ${PANEL_TABS.map(([t, n], i) => html`<button class=${classMap({ on: i === 2 })}>${t}${n ? html`<span class="count">${n}</span>` : nothing}</button>`)}
              </nav>
            </div>
          </section>

          <footer class="status">
            <span class="msg">寻求帮助,请按F1键</span>
            <span class="cell c78">Default</span>
            <span class="cell c66"></span>
            <span class="cell c46"></span><span class="cell c46"></span><span class="cell c46"></span><span class="cell c46"></span><span class="cell c46"></span>
            <span class="cell c82">
              <svg width="14" height="8"><path d="M0 .5h14M0 3.500h14" stroke="#b32020" /><path d="M1.500 0v8M4.500 0v8M7.500 0v8M10.500 0v6M13 0v6" stroke="#b32020" stroke-width="1.500" /></svg>账户被禁用
            </span>
          </footer>
        </main>
        <div class="behind"></div>
      </div>
      <div class="taskbar"><div class="task"></div></div>
    `;
  }
}
